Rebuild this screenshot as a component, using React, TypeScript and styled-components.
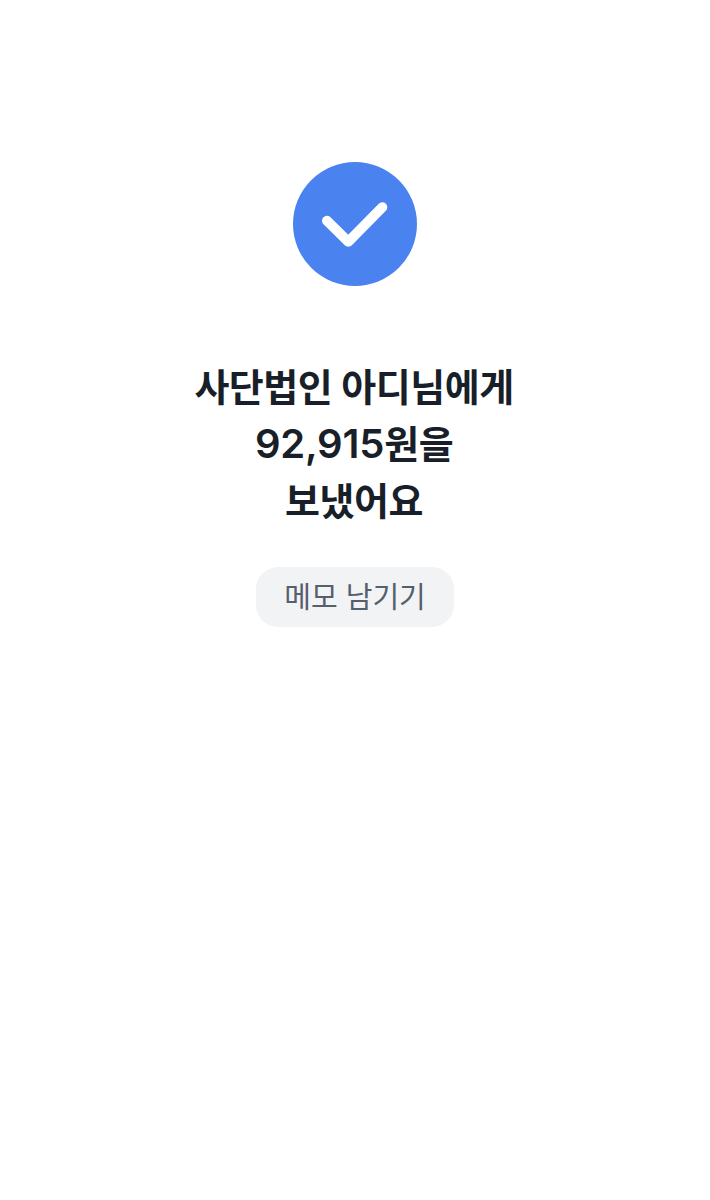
import styled, { createGlobalStyle } from 'styled-components'

const GlobalStyle = createGlobalStyle`
  html, body {
    margin: 0;
    padding: 0;
    background: #fff;
  }
`

const PageST = styled.div`
  width: 100%;
  min-height: 1200px;
  display: flex;
  flex-direction: column;
  align-items: center;
  padding-top: 162px;
  box-sizing: border-box;
  font-family: Inter, "Noto Sans CJK KR", sans-serif;
`

const CheckCircleST = styled.div`
  width: 124px;
  height: 124px;
  border-radius: 50%;
  background: #4a83f0;
  display: flex;
  align-items: center;
  justify-content: center;
`

const TitleST = styled.h1`
  margin: 73px 0 0;
  padding-right: 2px;
  font-size: 38px;
  line-height: 57px;
  font-weight: 600;
  color: #191f28;
  text-align: center;
  letter-spacing: -0.5px;
`

const AmountST = styled.span`
  font-size: 40px;
  line-height: 0;
  letter-spacing: -0.2px;
`

const MemoButtonST = styled.button`
  margin-top: 37px;
  width: 198px;
  height: 60px;
  padding: 0 0 5px;
  border: none;
  border-radius: 22px;
  background: #f2f3f5;
  color: #565f6c;
  font-family: inherit;
  font-size: 29px;
  font-weight: 400;
`

const App = () => {
  return (
    <PageST>
      <GlobalStyle />
      <CheckCircleST>
        <svg width="66" height="46" viewBox="0 0 66 46" fill="none">
          <path d="M5 19.7 L26.3 40.7 L60.3 6.3" stroke="#fff" strokeWidth="10" strokeLinecap="round" strokeLinejoin="round" />
        </svg>
      </CheckCircleST>
      <TitleST>
        사단법인 아디님에게<br />
        <AmountST>92,915</AmountST>원을<br />
        보냈어요
      </TitleST>
      <MemoButtonST>메모 남기기</MemoButtonST>
    </PageST>
  )
}

export default App
